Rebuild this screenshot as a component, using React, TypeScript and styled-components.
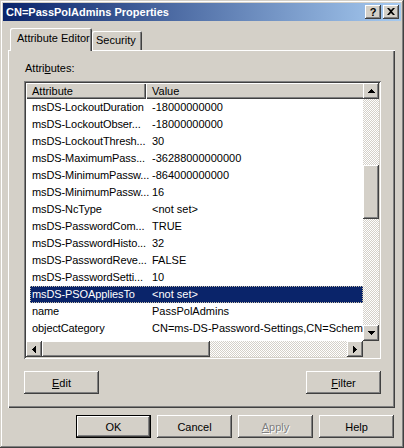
import styled, { createGlobalStyle } from "styled-components";

const GlobalStyle = createGlobalStyle`
  html, body {
    margin: 0;
    padding: 0;
    background: #d4d0c8;
  }
  body {
    font-family: "Liberation Sans", Arial, sans-serif;
    font-size: 11px;
    color: #000;
  }
  * {
    box-sizing: border-box;
  }
`;

const raised = `
  box-shadow: inset -1px -1px #404040, inset 1px 1px #ffffff,
    inset -2px -2px #808080, inset 2px 2px #d4d0c8;
`;

const rows = [
  { attr: "msDS-LockoutDuration", value: "-18000000000" },
  { attr: "msDS-LockoutObser...", value: "-18000000000" },
  { attr: "msDS-LockoutThresh...", value: "30" },
  { attr: "msDS-MaximumPass...", value: "-36288000000000" },
  { attr: "msDS-MinimumPassw...", value: "-864000000000" },
  { attr: "msDS-MinimumPassw...", value: "16" },
  { attr: "msDS-NcType", value: "<not set>" },
  { attr: "msDS-PasswordCom...", value: "TRUE" },
  { attr: "msDS-PasswordHisto...", value: "32" },
  { attr: "msDS-PasswordReve...", value: "FALSE" },
  { attr: "msDS-PasswordSetti...", value: "10" },
  { attr: "msDS-PSOAppliesTo", value: "<not set>", selected: true },
  { attr: "name", value: "PassPolAdmins" },
  {
    attr: "objectCategory",
    value: "CN=ms-DS-Password-Settings,CN=Schema,CN=Configuration,DC=contoso,DC=com",
  },
  { attr: "objectClass", value: "top; msDS-PasswordSettings" },
];

function ArrowIcon({ dir }: { dir: "up" | "down" | "left" | "right" }) {
  const vertical = dir === "up" || dir === "down";
  const steps = [1, 3, 5, 7];
  return (
    <svg width={vertical ? 7 : 4} height={vertical ? 4 : 7} fill="#000">
      {steps.map((len, i) => {
        const off = (7 - len) / 2;
        if (dir === "up") return <rect key={i} x={off} y={i} width={len} height={1} />;
        if (dir === "down") return <rect key={i} x={off} y={3 - i} width={len} height={1} />;
        if (dir === "left") return <rect key={i} x={i} y={off} width={1} height={len} />;
        return <rect key={i} x={3 - i} y={off} width={1} height={len} />;
      })}
    </svg>
  );
}

function App() {
  return (
    <>
      <GlobalStyle />
      <Window>
        <TitleBar>
          <TitleText>CN=PassPolAdmins Properties</TitleText>
          <TitleButtons>
            <TitleButton>?</TitleButton>
            <TitleButton>
              <svg width="8" height="7" fill="#000">
                <path d="M0 0H2L4 2L6 0H8L5 3.5L8 7H6L4 5L2 7H0L3 3.5Z" />
              </svg>
            </TitleButton>
          </TitleButtons>
        </TitleBar>

        <Body>
          <TabStrip>
            <Tab $active $width={82}>
              Attribute Editor
            </Tab>
            <Tab $width={50}>Security</Tab>
          </TabStrip>

          <Panel>
            <FieldLabel>
              Attri<u>b</u>utes:
            </FieldLabel>

            <ListBox>
              <ListContent>
                <HeaderRow>
                  <HeaderCell $width={120}>Attribute</HeaderCell>
                  <HeaderCell $width={420}>Value</HeaderCell>
                </HeaderRow>
                {rows.map((row, index) => (
                  <Row key={index} $selected={!!row.selected}>
                    <AttrCell>{row.attr}</AttrCell>
                    <ValueCell>{row.value}</ValueCell>
                  </Row>
                ))}
              </ListContent>

              <VScroll>
                <ScrollArrow>
                  <ArrowIcon dir="up" />
                </ScrollArrow>
                <VTrack>
                  <VThumb $offset={66} $size={54} />
                </VTrack>
                <ScrollArrow>
                  <ArrowIcon dir="down" />
                </ScrollArrow>
              </VScroll>

              <HScroll>
                <ScrollArrow>
                  <ArrowIcon dir="left" />
                </ScrollArrow>
                <HTrack>
                  <HThumb $offset={0} $size={168} />
                </HTrack>
                <ScrollArrow>
                  <ArrowIcon dir="right" />
                </ScrollArrow>
              </HScroll>

              <SizeBox />
            </ListBox>

            <PanelButtons>
              <Button>
                <u>E</u>dit
              </Button>
              <Button>
                <u>F</u>ilter
              </Button>
            </PanelButtons>
          </Panel>

          <DialogButtons>
            <Button $default>OK</Button>
            <Button>Cancel</Button>
            <Button $disabled>
              <u>A</u>pply
            </Button>
            <Button>Help</Button>
          </DialogButtons>
        </Body>
      </Window>
    </>
  );
}

export default App;

const Window = styled.div`
  width: 404px;
  height: 448px;
  padding: 3px;
  background: #d4d0c8;
  box-shadow: inset -1px -1px #404040, inset 1px 1px #d4d0c8,
    inset -2px -2px #808080, inset 2px 2px #ffffff;
  display: flex;
  flex-direction: column;
`;

const TitleBar = styled.div`
  height: 18px;
  display: flex;
  align-items: center;
  justify-content: space-between;
  padding: 0 2px 0 3px;
  background: linear-gradient(to right, #0a246a, #a6caf0);
`;

const TitleText = styled.div`
  color: #fff;
  font-weight: bold;
  font-size: 11px;
  white-space: nowrap;
`;

const TitleButtons = styled.div`
  display: flex;
  gap: 2px;
`;

const TitleButton = styled.div`
  width: 16px;
  height: 14px;
  background: #d4d0c8;
  ${raised}
  display: flex;
  align-items: center;
  justify-content: center;
  font-weight: bold;
  font-size: 11px;
  line-height: 14px;
  padding-bottom: 1px;
`;

const Body = styled.div`
  flex: 1;
  display: flex;
  flex-direction: column;
  padding: 7px 6px 7px 5px;
`;

const TabStrip = styled.div`
  height: 22px;
  display: flex;
  align-items: flex-end;
  padding-left: 2px;
`;

const Tab = styled.div<{ $active?: boolean; $width: number }>`
  position: relative;
  z-index: ${(p) => (p.$active ? 1 : 0)};
  width: ${(p) => p.$width}px;
  height: ${(p) => (p.$active ? 23 : 19)}px;
  margin-bottom: ${(p) => (p.$active ? -1 : 0)}px;
  padding-left: ${(p) => (p.$active ? 7 : 4)}px;
  line-height: ${(p) => (p.$active ? 21 : 19)}px;
  background: #d4d0c8;
  border-radius: 2px 2px 0 0;
  white-space: nowrap;
  box-shadow: inset 1px 1px #ffffff, inset -1px 0 #404040, inset -2px 0 #808080;
`;

const Panel = styled.div`
  height: 358px;
  display: flex;
  flex-direction: column;
  padding: 12px 14px 14px 16px;
  box-shadow: inset 1px 1px #ffffff, inset -1px -1px #404040,
    inset -2px -2px #808080;
`;

const FieldLabel = styled.div`
  height: 13px;
  line-height: 13px;
  padding-left: 1px;
  margin-bottom: 6px;
`;

const ListBox = styled.div`
  width: 357px;
  height: 278px;
  padding: 2px;
  background: #fff;
  box-shadow: inset 1px 1px #808080, inset -1px -1px #ffffff,
    inset 2px 2px #404040, inset -2px -2px #d4d0c8;
  display: grid;
  grid-template-columns: 1fr 16px;
  grid-template-rows: 1fr 16px;
`;

const ListContent = styled.div`
  overflow: hidden;
  display: flex;
  flex-direction: column;
  min-width: 0;
`;

const HeaderRow = styled.div`
  display: flex;
  height: 16px;
  flex-shrink: 0;
`;

const HeaderCell = styled.div<{ $width: number }>`
  width: ${(p) => p.$width}px;
  flex-shrink: 0;
  height: 16px;
  line-height: 16px;
  padding-left: 6px;
  background: #d4d0c8;
  box-shadow: inset 1px 1px #ffffff, inset -1px -1px #404040,
    inset -2px -2px #808080;
`;

const Row = styled.div<{ $selected: boolean }>`
  display: flex;
  flex-shrink: 0;
  height: 17px;
  line-height: 17px;
  margin-left: 4px;
  white-space: nowrap;
  background: ${(p) => (p.$selected ? "#0a246a" : "transparent")};
  color: ${(p) => (p.$selected ? "#fff" : "#000")};
  outline: ${(p) => (p.$selected ? "1px dotted #c8c0a8" : "none")};
  outline-offset: -1px;
`;

const AttrCell = styled.div`
  width: 116px;
  flex-shrink: 0;
  padding-left: 2px;
  letter-spacing: -0.1px;
`;

const ValueCell = styled.div`
  padding-left: 6px;
  flex-shrink: 0;
`;

const checker = `
  background: repeating-conic-gradient(#d4d0c8 0 25%, #ffffff 0 50%) 0 0 / 2px 2px;
`;

const VScroll = styled.div`
  display: flex;
  flex-direction: column;
`;

const HScroll = styled.div`
  display: flex;
`;

const ScrollArrow = styled.div`
  width: 16px;
  height: 16px;
  flex-shrink: 0;
  background: #d4d0c8;
  ${raised}
  display: flex;
  align-items: center;
  justify-content: center;
`;

const VTrack = styled.div`
  flex: 1;
  ${checker}
`;

const HTrack = styled.div`
  flex: 1;
  display: flex;
  ${checker}
`;

const VThumb = styled.div<{ $offset: number; $size: number }>`
  margin-top: ${(p) => p.$offset}px;
  height: ${(p) => p.$size}px;
  background: #d4d0c8;
  ${raised}
`;

const HThumb = styled.div<{ $offset: number; $size: number }>`
  margin-left: ${(p) => p.$offset}px;
  width: ${(p) => p.$size}px;
  background: #d4d0c8;
  ${raised}
`;

const SizeBox = styled.div`
  background: #d4d0c8;
`;

const PanelButtons = styled.div`
  display: flex;
  justify-content: space-between;
  width: 357px;
  margin-top: 12px;
`;

const Button = styled.div<{ $default?: boolean; $disabled?: boolean }>`
  width: 75px;
  height: 23px;
  display: flex;
  align-items: center;
  justify-content: center;
  background: #d4d0c8;
  border: ${(p) => (p.$default ? "1px solid #000" : "none")};
  ${raised}
  color: ${(p) => (p.$disabled ? "#808080" : "#000")};
  text-shadow: ${(p) => (p.$disabled ? "1px 1px #ffffff" : "none")};
`;

const DialogButtons = styled.div`
  display: flex;
  justify-content: flex-end;
  gap: 6px;
  margin-top: 7px;
  padding-right: 1px;
`;
